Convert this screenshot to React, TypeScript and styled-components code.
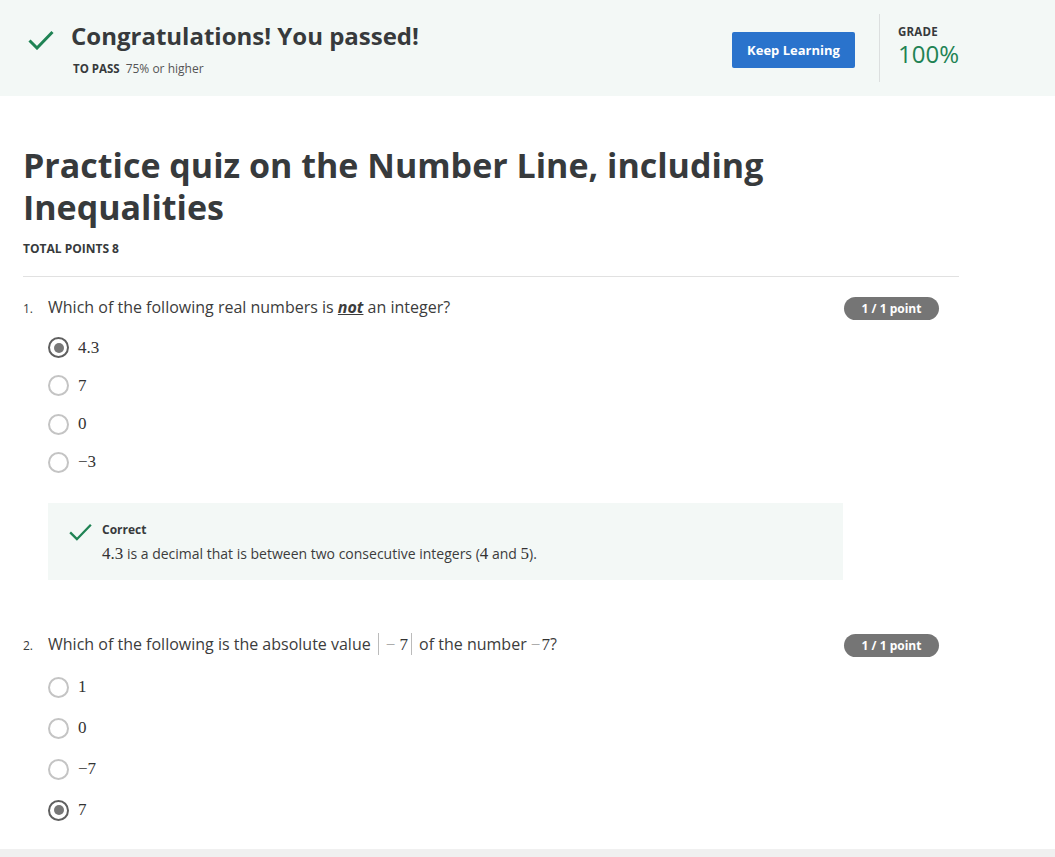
import React from "react";
import styled, { createGlobalStyle } from "styled-components";

const GlobalStyle = createGlobalStyle`
  html, body { margin: 0; padding: 0; background: #ffffff; }
  body { font-family: "Open Sans", "Noto Sans", Arial, sans-serif; color: #373a3c; }
  * { box-sizing: border-box; }
`;

const Page = styled.div`
  width: 1055px;
  min-height: 857px;
  display: flex;
  flex-direction: column;
`;

const Banner = styled.header`
  height: 96px;
  background: #f3f8f6;
  display: flex;
  align-items: stretch;
  padding: 14px 0 14px 28px;
`;

const BannerMain = styled.div`
  flex: 1;
  display: flex;
  align-items: flex-start;
  padding-top: 6px;
`;

const BannerIcon = styled.svg`
  width: 26px;
  height: 20px;
  margin-top: 10px;
  flex: none;
`;

const BannerText = styled.div`
  margin-left: 17px;
  display: flex;
  flex-direction: column;
`;

const BannerTitle = styled.h2`
  margin: 0;
  font-size: 24px;
  line-height: 32px;
  font-weight: 700;
  color: #373a3c;
`;

const PassLine = styled.div`
  margin-top: 9px;
  margin-left: 2px;
  font-size: 12px;
  line-height: 16px;
  color: #555;
  display: flex;
  gap: 6px;
  align-items: baseline;
`;

const PassLabel = styled.span`
  font-size: 11.5px;
  font-weight: 700;
  color: #373a3c;
`;

const PassValue = styled.span`
  font-size: 12px;
`;

const PrimaryButton = styled.button`
  align-self: center;
  margin-top: 4px;
  width: 123px;
  height: 36px;
  border: none;
  border-radius: 2px;
  background: #2a73cc;
  color: #fff;
  font-family: inherit;
  font-size: 13px;
  font-weight: 700;
  cursor: pointer;
`;

const VDivider = styled.div`
  width: 1px;
  background: #dcdfdf;
  margin-left: 24px;
`;

const GradeBlock = styled.div`
  width: 175px;
  padding-left: 18px;
  padding-top: 10px;
  display: flex;
  flex-direction: column;
`;

const GradeLabel = styled.div`
  font-size: 11.5px;
  line-height: 16px;
  font-weight: 700;
  color: #373a3c;
  letter-spacing: 0.2px;
`;

const GradeValue = styled.div`
  font-size: 24px;
  line-height: 28px;
  font-weight: 400;
  color: #1f8354;
`;

const Main = styled.main`
  width: 959px;
  padding-left: 23px;
  flex: 1;
`;

const QuizTitle = styled.h1`
  margin: 48px 0 0;
  max-width: 800px;
  font-size: 34px;
  line-height: 42px;
  font-weight: 700;
  color: #373a3c;
`;

const TotalPoints = styled.div`
  margin-top: 13px;
  font-size: 12px;
  line-height: 16px;
  font-weight: 700;
  color: #373a3c;
`;

const Rule = styled.hr`
  margin: 19px 0 0;
  border: none;
  border-top: 1px solid #e1e1e1;
`;

const Question = styled.section<{ $top: number }>`
  margin-top: ${(p) => p.$top}px;
`;

const QuestionRow = styled.div`
  display: flex;
  align-items: center;
  height: 24px;
`;

const QNumber = styled.span`
  width: 25px;
  font-size: 12px;
  color: #373a3c;
  flex: none;
`;

const QText = styled.div`
  flex: 1;
  font-size: 16px;
  line-height: 24px;
  color: #3c3c3c;
  margin-top: -2px;
`;

const Emph = styled.em`
  font-weight: 700;
  text-decoration: underline;
`;

const Badge = styled.span`
  width: 95px;
  height: 23px;
  margin-right: 20px;
  border-radius: 12px;
  background: #757575;
  color: #fff;
  font-size: 12px;
  font-weight: 700;
  display: flex;
  align-items: center;
  justify-content: center;
`;

const Options = styled.div<{ $gap: number; $top: number }>`
  display: flex;
  flex-direction: column;
  gap: ${(p) => p.$gap}px;
  margin-top: ${(p) => p.$top}px;
  padding-left: 25px;
`;

const Option = styled.label`
  display: flex;
  align-items: center;
  height: 21px;
  gap: 9px;
`;

const Radio = styled.span<{ $checked?: boolean }>`
  width: 21px;
  height: 21px;
  border-radius: 50%;
  flex: none;
  border: ${(p) => (p.$checked ? "2.5px solid #5f5f5f" : "2px solid #c4c4c4")};
  display: flex;
  align-items: center;
  justify-content: center;
  &::after {
    content: "";
    display: ${(p) => (p.$checked ? "block" : "none")};
    width: 10px;
    height: 10px;
    border-radius: 50%;
    background: #777;
  }
`;

const Math = styled.span`
  font-family: "Liberation Serif", "Times New Roman", serif;
  font-size: 17px;
  color: #333;
`;

const MathBar = styled.span`
  display: inline-block;
  width: 1px;
  height: 22px;
  background: #bbb;
  vertical-align: -5px;
  margin: 0 3px;
`;

const MathMinus = styled.span<{ $binary?: boolean }>`
  color: #999;
  margin: ${(p) => (p.$binary ? "0 4px" : "0 1px 0 0")};
`;

const Feedback = styled.div`
  margin-top: 30px;
  margin-left: 25px;
  width: 795px;
  height: 77px;
  background: #f3f8f6;
  display: flex;
  align-items: flex-start;
  padding: 18px 20px 0 20px;
`;

const FeedbackIcon = styled.svg`
  width: 25px;
  height: 18px;
  margin-top: 2px;
  flex: none;
`;

const FeedbackBody = styled.div`
  margin-left: 9px;
  display: flex;
  flex-direction: column;
`;

const FeedbackTitle = styled.div`
  font-size: 12px;
  line-height: 18px;
  font-weight: 700;
  color: #373a3c;
`;

const FeedbackText = styled.div`
  margin-top: 4px;
  font-size: 14px;
  line-height: 22px;
  color: #3c3c3c;
`;

const Footer = styled.footer`
  height: 8px;
  margin-top: 26px;
  background: #f0f0f0;
`;

const Check = ({ as: C, sw }: { as: typeof BannerIcon; sw: number }) => (
  <C viewBox="0 0 26 20" fill="none">
    <polyline
      points="1.5,10.5 9,18 24.5,2"
      stroke="#1f8354"
      strokeWidth={sw}
      strokeLinecap="butt"
      strokeLinejoin="miter"
    />
  </C>
);

type Opt = { label: React.ReactNode; checked?: boolean };

const OptionList = ({ items, gap, top }: { items: Opt[]; gap: number; top: number }) => (
  <Options $gap={gap} $top={top}>
    {items.map((o, i) => (
      <Option key={i}>
        <Radio $checked={o.checked} />
        <Math>{o.label}</Math>
      </Option>
    ))}
  </Options>
);

export default function App() {
  return (
    <Page>
      <GlobalStyle />
      <Banner>
        <BannerMain>
          <Check as={BannerIcon} sw={3} />
          <BannerText>
            <BannerTitle>Congratulations! You passed!</BannerTitle>
            <PassLine>
              <PassLabel>TO PASS</PassLabel>
              <PassValue>75% or higher</PassValue>
            </PassLine>
          </BannerText>
        </BannerMain>
        <PrimaryButton>Keep Learning</PrimaryButton>
        <VDivider />
        <GradeBlock>
          <GradeLabel>GRADE</GradeLabel>
          <GradeValue>100%</GradeValue>
        </GradeBlock>
      </Banner>

      <Main>
        <QuizTitle>Practice quiz on the Number Line, including Inequalities</QuizTitle>
        <TotalPoints>TOTAL POINTS 8</TotalPoints>
        <Rule />

        <Question $top={19}>
          <QuestionRow>
            <QNumber>1.</QNumber>
            <QText>
              Which of the following real numbers is <Emph>not</Emph> an integer?
            </QText>
            <Badge>1 / 1 point</Badge>
          </QuestionRow>
          <OptionList
            top={17}
            gap={17.3}
            items={[
              { label: "4.3", checked: true },
              { label: "7" },
              { label: "0" },
              { label: "−3" },
            ]}
          />
          <Feedback>
            <Check as={FeedbackIcon} sw={2.6} />
            <FeedbackBody>
              <FeedbackTitle>Correct</FeedbackTitle>
              <FeedbackText>
                <Math>4.3</Math> is a decimal that is between two consecutive integers (
                <Math>4</Math> and <Math>5</Math>).
              </FeedbackText>
            </FeedbackBody>
          </Feedback>
        </Question>

        <Question $top={54}>
          <QuestionRow>
            <QNumber>2.</QNumber>
            <QText>
              Which of the following is the absolute value{" "}
              <Math>
                <MathBar />
                <MathMinus $binary>−</MathMinus>7<MathBar />
              </Math>{" "}
              of the number{" "}
              <Math>
                <MathMinus>−</MathMinus>7
              </Math>
              ?
            </QText>
            <Badge>1 / 1 point</Badge>
          </QuestionRow>
          <OptionList
            top={19}
            gap={20}
            items={[
              { label: "1" },
              { label: "0" },
              { label: "−7" },
              { label: "7", checked: true },
            ]}
          />
        </Question>
      </Main>
      <Footer />
    </Page>
  );
}
